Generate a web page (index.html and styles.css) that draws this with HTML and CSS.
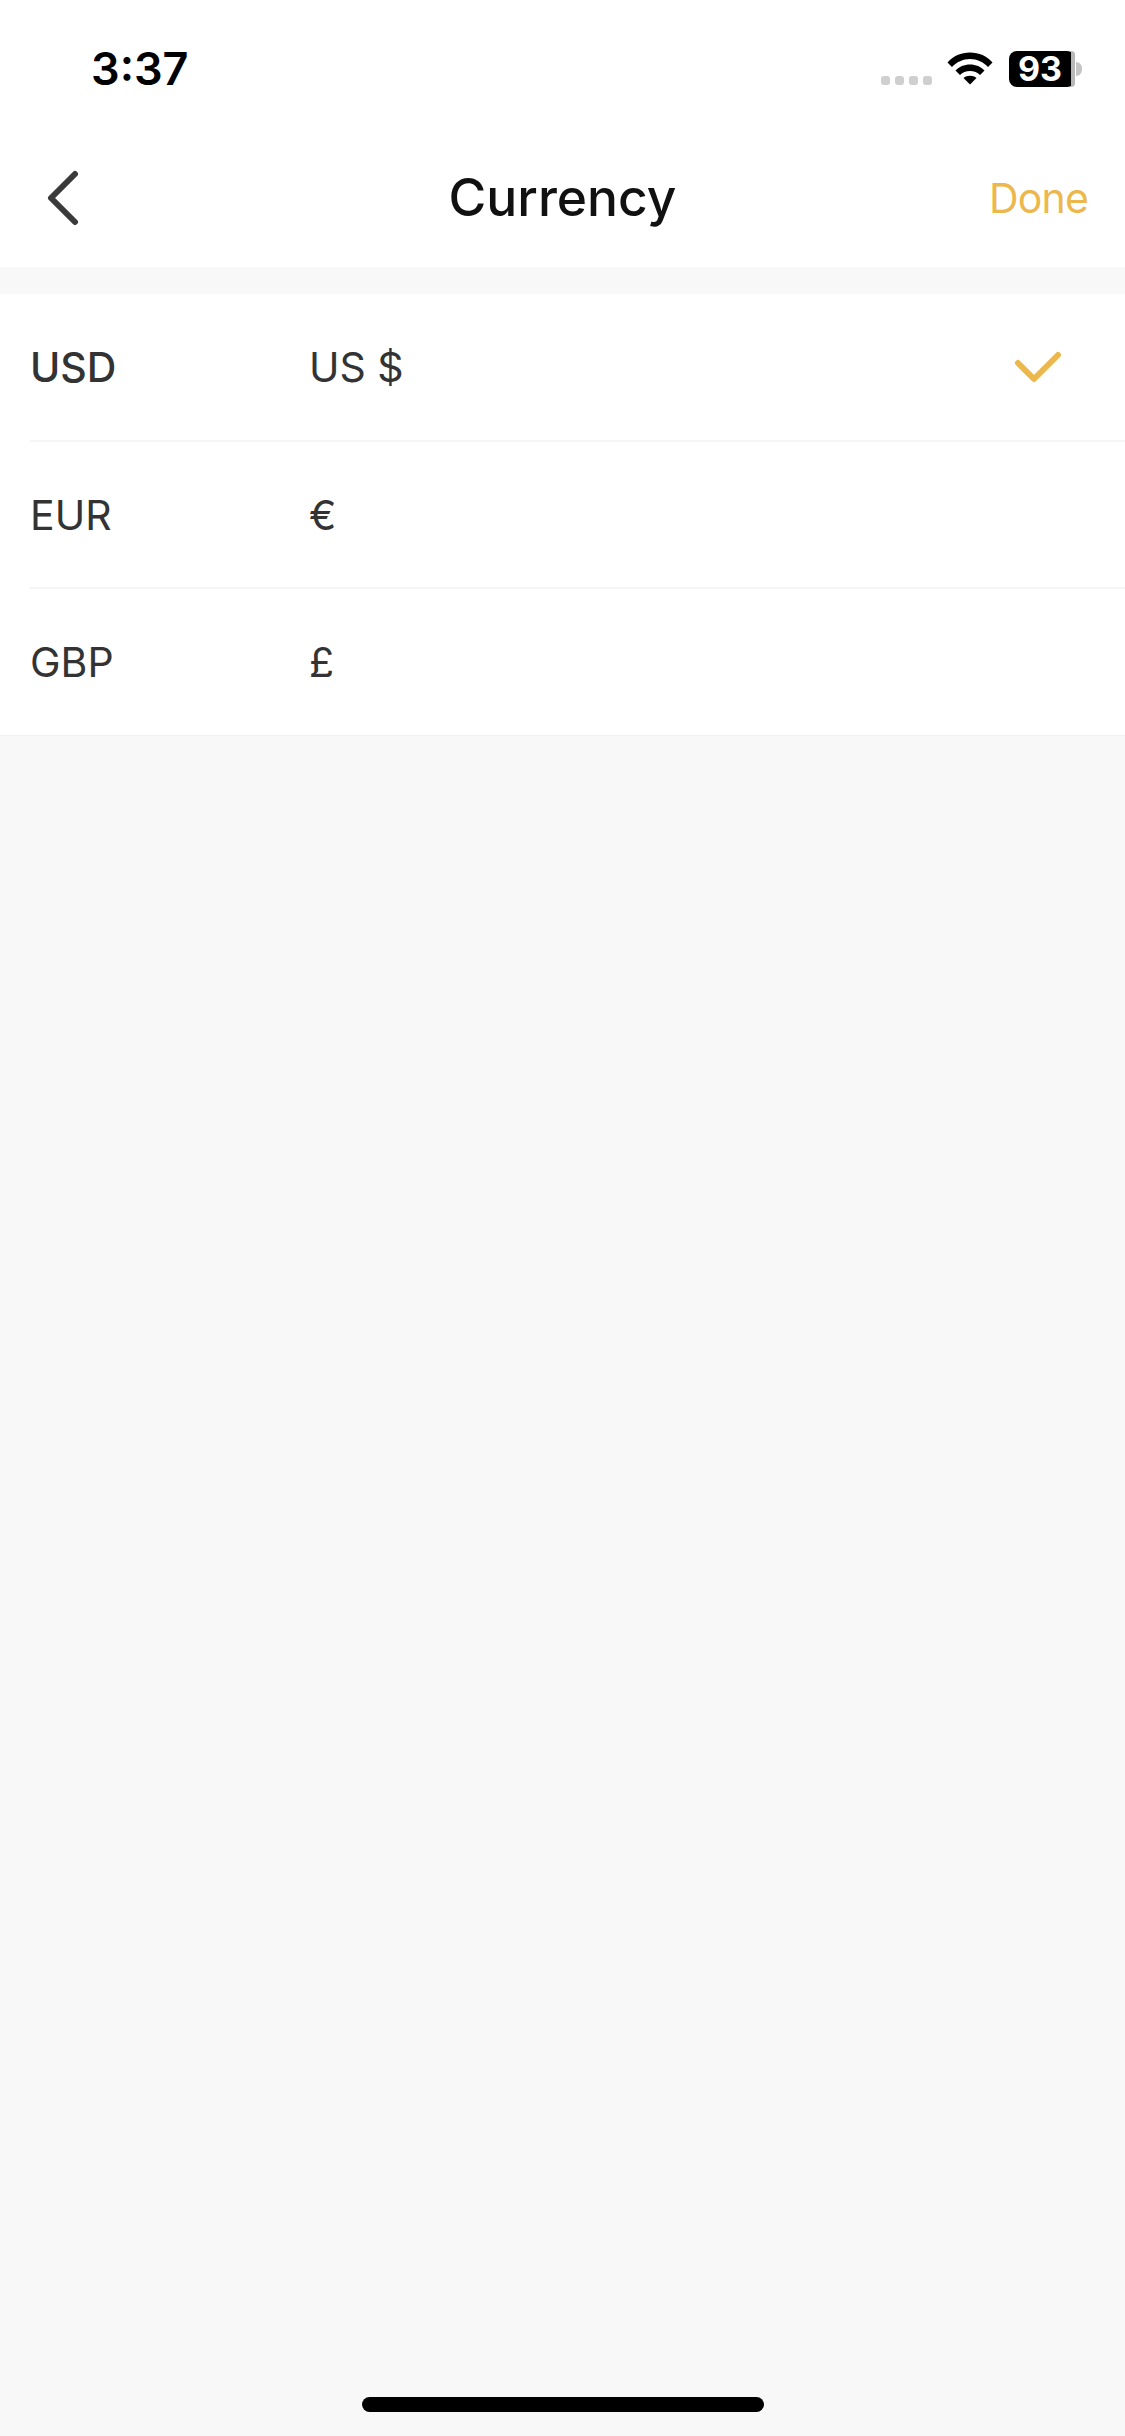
FILE: index.html
```html
<!DOCTYPE html>
<html>
<head>
<meta charset="utf-8">
<title>Currency</title>
<link rel="stylesheet" href="styles.css">
</head>
<body>
	<div class="status">
		<span class="time">3:37</span>
		<div class="status-icons">
			<div class="dots"><i></i><i></i><i></i><i></i></div>
			<svg class="wifi" width="46" height="34" viewBox="0 0 46 34">
				<path d="M0.5 11.500C6 5 14 1.500 23 1.500S40 5 45.500 11.500L41 16C36.500 11 30 8 23 8S9.500 11 5 16Z"/>
				<path d="M8.500 19.500C12 15.800 17.200 13.500 23 13.500S34 15.800 37.500 19.500L33 24C30.500 21.500 27 20 23 20S15.500 21.500 13 24Z"/>
				<path d="M16.500 27C18.200 25.500 20.500 24.700 23 24.700S27.800 25.500 29.500 27L23 33.500Z"/>
			</svg>
			<div class="battery">
				<div class="battery-body">
					<span class="battery-num">93</span>
					<i class="battery-rest"></i>
				</div>
				<i class="battery-tip"></i>
			</div>
		</div>
	</div>
	<div class="header">
		<svg class="back" width="32" height="56" viewBox="0 0 32 56">
			<path d="M28 4L4 28L28 52"/>
		</svg>
		<h1 class="title">Currency</h1>
		<span class="done">Done</span>
	</div>
	<ul class="list">
		<li class="row">
			<span class="code code-on">USD</span>
			<span class="symbol">US $</span>
			<svg class="check" width="48" height="32" viewBox="0 0 48 32">
				<path d="M3 12L19 28L43 4"/>
			</svg>
		</li>
		<li class="row">
			<span class="code">EUR</span>
			<span class="symbol">€</span>
		</li>
		<li class="row">
			<span class="code">GBP</span>
			<span class="symbol">£</span>
		</li>
	</ul>
	<div class="rest">
		<div class="home"></div>
	</div>
</body>
</html>
```

FILE: styles.css
```css
* {
	margin: 0;
	padding: 0;
	box-sizing: border-box;
}
html, body {
	height: 2436px;
}
body {
	width: 1125px;
	background-color: #f8f8f8;
	font-family: Inter, "Liberation Sans", sans-serif;
	display: flex;
	flex-direction: column;
	overflow: hidden;
}

/* status bar */
.status {
	height: 135px;
	background-color: #fff;
	display: flex;
	justify-content: space-between;
	align-items: flex-start;
	padding: 42px 43px 0 91px;
}
.time {
	font-size: 45px;
	line-height: 53px;
	font-weight: 600;
	color: #000;
}
.status-icons {
	display: flex;
	align-items: flex-start;
	padding-top: 9px;
}
.dots {
	display: flex;
	gap: 5px;
	margin-top: 25px;
	margin-right: 15px;
}
.dots i {
	width: 9px;
	height: 9px;
	border-radius: 3px;
	background-color: #cfcfcf;
}
.wifi {
	fill: #000;
	margin-right: 16px;
}
.battery {
	display: flex;
	align-items: center;
}
.battery-body {
	width: 66px;
	height: 36px;
	border-radius: 8px;
	background-color: #000;
	display: flex;
}
.battery-num {
	flex: 1;
	color: #fff;
	font-size: 34px;
	line-height: 36px;
	font-weight: 700;
	text-align: center;
}
.battery-rest {
	width: 4px;
	border-radius: 0 8px 8px 0;
	background-color: #b8b8b8;
}
.battery-tip {
	width: 6px;
	height: 14px;
	margin-left: 1px;
	border-radius: 0 7px 7px 0;
	background-color: #c4c4c4;
}

/* nav bar */
.header {
	height: 132px;
	background-color: #fff;
	display: grid;
	grid-template-columns: 1fr auto 1fr;
	align-items: center;
	padding: 0 37px 6px 37px;
}
.back {
	margin-left: 10px;
	fill: none;
	stroke: #3a3a3a;
	stroke-width: 6;
	stroke-linecap: round;
	stroke-linejoin: round;
}
.title {
	margin-bottom: 2px;
	font-size: 51.5px;
	font-weight: 500;
	color: #111;
}
.done {
	justify-self: end;
	font-size: 41px;
	letter-spacing: -0.8px;
	color: #ecb84c;
}

/* list */
.list {
	list-style: none;
	margin-top: 27px;
	background-color: #fff;
	border-bottom: 1px solid #f0f0f0;
}
.row {
	height: 148px;
	margin-left: 30px;
	display: flex;
	align-items: center;
	border-bottom: 2px solid #f5f5f5;
	font-size: 41px;
	color: #333;
}
.row:nth-child(2) {
	height: 147px;
}
.row:last-child {
	height: 146px;
	padding-bottom: 1px;
	border-bottom: 0;
}
.code {
	width: 279px;
}
.code-on {
	font-weight: 500;
}
.symbol {
	flex: 1;
}
.check {
	margin-right: 62px;
	fill: none;
	stroke: #ecb84c;
	stroke-width: 6;
	stroke-linecap: round;
	stroke-linejoin: round;
}

/* home bar */
.rest {
	flex: 1;
	display: flex;
	justify-content: center;
	align-items: flex-end;
	padding-bottom: 24px;
}
.home {
	width: 402px;
	height: 15px;
	border-radius: 8px;
	background-color: #000;
}
```
